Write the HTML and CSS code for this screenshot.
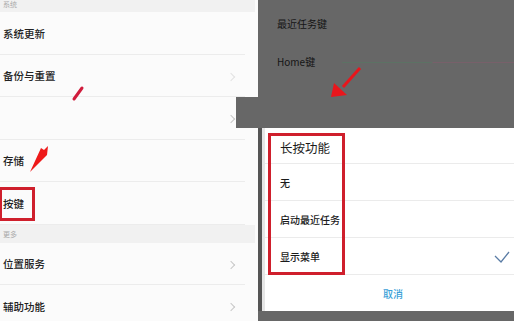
FILE: index.html
```html
<!DOCTYPE html>
<html lang="zh">
<head>
<meta charset="utf-8">
<link rel="stylesheet" href="styles.css">
</head>
<body>
<div class="stage">
  <div class="settings">
    <div class="sec sec-top">系统</div>
    <div class="row"><span>系统更新</span></div>
    <div class="row"><span>备份与重置</span><i class="chev faint"></i></div>
    <div class="row"><span></span><i class="chev"></i></div>
    <div class="row"><span>存储</span></div>
    <div class="row"><span class="boxed">按键</span></div>
    <div class="sec">更多</div>
    <div class="row"><span>位置服务</span><i class="chev"></i></div>
    <div class="row last"><span>辅助功能</span><i class="chev"></i></div>
  </div>

  <div class="keys">
    <div class="key">最近任务键</div>
    <div class="key">Home键</div>
    <div class="streak"></div>
  </div>
  <div class="dimband"></div>

  <div class="dialog">
    <div class="card">
      <div class="opts">
        <div class="opt title">长按功能</div>
        <div class="opt">无</div>
        <div class="opt">启动最近任务</div>
        <div class="opt">显示菜单
          <svg class="check" width="16" height="12" viewBox="0 0 16 12"><polyline points="1,5 7,11 15,1" fill="none" stroke="#5a7ca5" stroke-width="1.3"/></svg>
        </div>
        <div class="redbox"></div>
      </div>
      <div class="cancel">取消</div>
    </div>
  </div>

  <svg class="arrows" width="514" height="321" viewBox="0 0 514 321">
    <line x1="82" y1="88" x2="74" y2="99" stroke="#d01c3c" stroke-width="3" stroke-linecap="round"/>
    <polygon points="30,172 41,148 44,150 48,146 47,155" fill="#ee1a1a"/>
    <line x1="360" y1="68" x2="343" y2="87" stroke="#e8161c" stroke-width="3"/>
    <polygon points="331,97 334,83 347,95" fill="#e8161c"/>
  </svg>
</div>
</body>
</html>
```

FILE: styles.css
```css
html, body {
  margin: 0;
  padding: 0;
  background: #fafafa;
}
.stage {
  position: relative;
  width: 514px;
  height: 321px;
  overflow: hidden;
  font-family: "Noto Sans CJK SC", "Noto Sans", sans-serif;
  color: #1e1e1e;
}
.settings {
  width: 258px;
  display: flex;
  flex-direction: column;
  background: #fbfbfb;
}
.sec {
  height: 18px;
  background: #f1f1f1;
  font-size: 7px;
  color: #aaa;
  padding-left: 3px;
  display: flex;
  align-items: center;
  width: 252px;
}
.sec-top {
  height: 12px;
  align-items: flex-start;
  line-height: 8px;
}
.row {
  height: 42.5px;
  box-sizing: border-box;
  display: flex;
  align-items: center;
  justify-content: space-between;
  padding: 0 24px 0 3px;
  font-size: 10.5px;
  font-weight: 500;
  color: #222;
  position: relative;
}
.row::after {
  content: "";
  position: absolute;
  left: 0;
  right: 13px;
  bottom: 0;
  height: 1px;
  background: #ececec;
}
.row.last::after { display: none; }
.chev {
  width: 5px;
  height: 5px;
  border-right: 1px solid #c8c8c8;
  border-top: 1px solid #c8c8c8;
  transform: rotate(45deg);
  margin-top: 2px;
}
.chev.faint { border-color: #e2e2e2; }
.boxed {
  position: relative;
}
.boxed::before {
  content: "";
  position: absolute;
  left: -4px;
  top: -9px;
  width: 30px;
  height: 28px;
  border: 3px solid #cf1f2c;
}
.keys {
  position: absolute;
  left: 258px;
  top: 0;
  width: 256px;
  height: 97px;
  background: #676767;
  box-sizing: border-box;
  padding: 16px 0 0 19px;
  display: flex;
  flex-direction: column;
  gap: 22px;
}
.key {
  font-size: 10px;
  color: #151515;
  line-height: 16px;
}
.streak {
  position: absolute;
  left: 84px;
  top: 62px;
  width: 172px;
  height: 1px;
  background: linear-gradient(90deg, #5c7264 0%, #5c7264 52%, #78606a 53%, #78606a 100%);
}
.dimband {
  position: absolute;
  left: 236px;
  top: 97px;
  width: 278px;
  height: 31px;
  background: #676767;
}
.dialog {
  position: absolute;
  left: 258px;
  top: 128px;
  width: 256px;
  height: 193px;
  background: #676767;
  display: flex;
  flex-direction: column;
}
.card {
  height: 183px;
  background: #ffffff;
  border-left: 4px solid #555;
  box-shadow: inset 3px 0 0 #e6e6e6;
  display: flex;
  flex-direction: column;
  padding-top: 5px;
  box-sizing: border-box;
}
.opts {
  position: relative;
  display: flex;
  flex-direction: column;
}
.opt {
  height: 37px;
  box-sizing: border-box;
  border-bottom: 1px solid #ebebeb;
  display: flex;
  align-items: center;
  padding-left: 15px;
  font-size: 10px;
  font-weight: 500;
  color: #1b1b1b;
  margin-left: 3px;
  position: relative;
}
.opt.title {
  height: 31px;
  font-size: 12.5px;
  font-weight: 400;
  align-items: flex-start;
  padding-top: 5px;
}
.check {
  position: absolute;
  right: 4px;
  top: 13px;
}
.redbox {
  position: absolute;
  left: 6px;
  top: 0;
  width: 77px;
  height: 142px;
  box-sizing: border-box;
  border: 3px solid #cf1f2c;
}
.cancel {
  flex: 1;
  display: flex;
  align-items: center;
  justify-content: center;
  font-size: 10px;
  font-weight: 500;
  color: #3a9fd8;
  padding-left: 10px;
}
.arrows {
  position: absolute;
  left: 0;
  top: 0;
  pointer-events: none;
}
```
